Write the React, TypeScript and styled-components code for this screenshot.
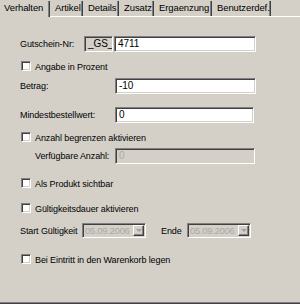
import styled, { createGlobalStyle } from 'styled-components';

const GlobalStyle = createGlobalStyle`
  html, body {
    margin: 0;
    padding: 0;
    background: #d4d0c8;
  }
  body {
    font-family: "Liberation Sans", Arial, sans-serif;
    font-size: 9px;
    letter-spacing: -0.1px;
    color: #000000;
  }
`

const Window = styled.div`
  width: 300px;
  height: 304px;
  background: #d4d0c8;
  display: flex;
  flex-direction: column;
  overflow: hidden;
`

const TabStrip = styled.div`
  display: flex;
  height: 16px;
  align-items: stretch;
  padding-top: 1px;
  box-sizing: border-box;
`

const Tab = styled.div<{ active?: boolean; w: number }>`
  width: ${props => props.w}px;
  box-sizing: border-box;
  padding-left: 5px;
  line-height: 14px;
  font-size: 9.5px;
  white-space: nowrap;
  border-right: 1px solid #404040;
  box-shadow: inset -1px 0 #808080;
  ${props => props.active && `
    padding-left: 4px;
    margin-bottom: -1px;
    background: #d4d0c8;
    position: relative;
    z-index: 1;
  `}
`

const Panel = styled.div`
  flex: 1;
  border-top: 1px solid #ffffff;
  border-bottom: 1px solid #404040;
  box-shadow: inset 0 -1px #808080;
  display: flex;
  flex-direction: column;
  padding: 19px 0 0 20px;
`

const Row = styled.div<{ top: number; indent?: number }>`
  display: flex;
  align-items: center;
  margin-top: ${props => props.top}px;
  padding-left: ${props => props.indent || 0}px;
`

const Label = styled.span<{ w?: number; ml?: number }>`
  width: ${props => (props.w ? `${props.w}px` : 'auto')};
  margin-left: ${props => props.ml || 0}px;
  flex-shrink: 0;
  white-space: nowrap;
`

const Field = styled.div<{ w: number; disabled?: boolean; readOnly?: boolean; ml?: number }>`
  width: ${props => props.w}px;
  height: 16px;
  box-sizing: border-box;
  margin-left: ${props => props.ml || 0}px;
  background: ${props => (props.disabled || props.readOnly ? '#d4d0c8' : '#ffffff')};
  color: ${props => (props.disabled ? '#a8a8a8' : '#000000')};
  border-top: 1px solid #808080;
  border-left: 1px solid #808080;
  border-right: 1px solid #ffffff;
  border-bottom: 1px solid #ffffff;
  box-shadow: inset 1px 1px #404040, inset -1px -1px #d4d0c8;
  padding-left: 3px;
  line-height: 14px;
  font-size: 10px;
  white-space: nowrap;
  overflow: hidden;
`

const Check = styled.span`
  width: 10px;
  height: 10px;
  box-sizing: border-box;
  flex-shrink: 0;
  background: #ffffff;
  border-top: 1px solid #808080;
  border-left: 1px solid #808080;
  border-right: 1px solid #ffffff;
  border-bottom: 1px solid #ffffff;
  box-shadow: inset 1px 1px #404040, inset -1px -1px #d4d0c8;
  margin: 1px 4px 2px 1px;
`

const Combo = styled.div<{ ml?: number }>`
  width: 64px;
  height: 15px;
  box-sizing: border-box;
  margin-left: ${props => props.ml || 0}px;
  display: flex;
  background: #d4d0c8;
  color: #a8a8a8;
  border-top: 1px solid #808080;
  border-left: 1px solid #808080;
  border-right: 1px solid #ffffff;
  border-bottom: 1px solid #ffffff;
  box-shadow: inset 1px 1px #404040, inset -1px -1px #d4d0c8;
  padding: 1px;
`

const ComboText = styled.span`
  flex: 1;
  padding-left: 1px;
  line-height: 11px;
  font-size: 9.5px;
  letter-spacing: -0.3px;
  white-space: nowrap;
  overflow: hidden;
`

const ComboButton = styled.span`
  width: 11px;
  flex-shrink: 0;
  box-sizing: border-box;
  border-top: 1px solid #ffffff;
  border-left: 1px solid #ffffff;
  border-right: 1px solid #404040;
  border-bottom: 1px solid #404040;
  box-shadow: inset -1px -1px #808080;
  display: flex;
  align-items: center;
  justify-content: center;
`

const Arrow = styled.span`
  width: 0;
  height: 0;
  border-left: 3px solid transparent;
  border-right: 3px solid transparent;
  border-top: 3px solid #a0a0a0;
`

const tabs = [
  { name: 'Verhalten', w: 50 },
  { name: 'Artikel', w: 33 },
  { name: 'Details', w: 36 },
  { name: 'Zusatz', w: 35 },
  { name: 'Ergaenzung', w: 58 },
  { name: 'Benutzerdef.', w: 59 },
]

export default function App() {
  return (
    <Window>
      <GlobalStyle />
      <TabStrip>
        {tabs.map((it, idx) => (
          <Tab key={idx} w={it.w} active={idx === 0}>{it.name}</Tab>
        ))}
      </TabStrip>
      <Panel>
        <Row top={0}>
          <Label w={64}>Gutschein-Nr:</Label>
          <Field w={29} readOnly>_GS_</Field>
          <Field w={142} ml={1}>4711</Field>
        </Row>
        <Row top={8}>
          <Check />
          <Label>Angabe in Prozent</Label>
        </Row>
        <Row top={5}>
          <Label w={95}>Betrag:</Label>
          <Field w={141}>-10</Field>
        </Row>
        <Row top={13}>
          <Label w={95}>Mindestbestellwert:</Label>
          <Field w={139}>0</Field>
        </Row>
        <Row top={8}>
          <Check />
          <Label>Anzahl begrenzen aktivieren</Label>
        </Row>
        <Row top={4} indent={15}>
          <Label w={80}>Verfügbare Anzahl:</Label>
          <Field w={140} disabled>0</Field>
        </Row>
        <Row top={13}>
          <Check />
          <Label>Als Produkt sichtbar</Label>
        </Row>
        <Row top={12}>
          <Check />
          <Label>Gültigkeitsdauer aktivieren</Label>
        </Row>
        <Row top={8}>
          <Label w={62}>Start Gültigkeit</Label>
          <Combo>
            <ComboText>05.09.2006</ComboText>
            <ComboButton><Arrow /></ComboButton>
          </Combo>
          <Label w={26} ml={15}>Ende</Label>
          <Combo>
            <ComboText>05.09.2006</ComboText>
            <ComboButton><Arrow /></ComboButton>
          </Combo>
        </Row>
        <Row top={15}>
          <Check />
          <Label>Bei Eintritt in den Warenkorb legen</Label>
        </Row>
      </Panel>
    </Window>
  );
}
